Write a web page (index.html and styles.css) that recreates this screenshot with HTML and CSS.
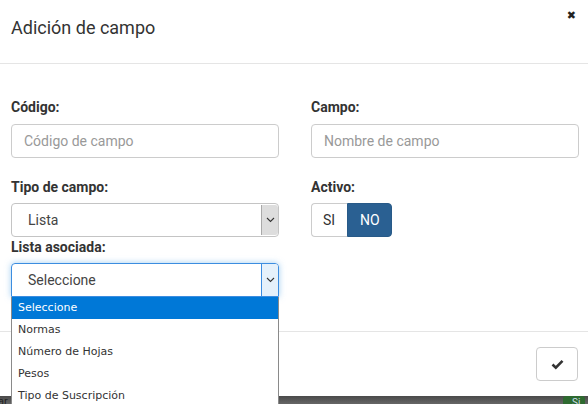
FILE: index.html
```html
<!DOCTYPE html>
<html lang="es">
<head>
<meta charset="utf-8">
<link rel="stylesheet" href="styles.css">
</head>
<body>
<div class="modal">
  <div class="modal-header">
    <h4 class="modal-title">Adición de campo</h4>
    <span class="close">&#x2716;</span>
  </div>
  <div class="modal-body">
    <div class="row">
      <div class="col">
        <label class="lbl">Código:</label>
        <div class="input placeholder">Código de campo</div>
        <label class="lbl lbl-gap">Tipo de campo:</label>
        <div class="select">
          <span class="select-text">Lista</span>
          <span class="arrow"><svg width="9" height="6" viewBox="0 0 9 6"><path d="M1 1 L4.5 4.5 L8 1" fill="none" stroke="#333" stroke-width="1.1"/></svg></span>
        </div>
        <label class="lbl lbl-tight">Lista asociada:</label>
        <div class="select focus">
          <span class="select-text">Seleccione</span>
          <span class="arrow"><svg width="9" height="6" viewBox="0 0 9 6"><path d="M1 1 L4.5 4.5 L8 1" fill="none" stroke="#333" stroke-width="1.1"/></svg></span>
          <ul class="dropdown">
            <li class="sel">Seleccione</li>
            <li>Normas</li>
            <li>Número de Hojas</li>
            <li>Pesos</li>
            <li>Tipo de Suscripción</li>
          </ul>
        </div>
      </div>
      <div class="col">
        <label class="lbl">Campo:</label>
        <div class="input placeholder">Nombre de campo</div>
        <label class="lbl lbl-gap">Activo:</label>
        <div class="toggle">
          <span class="opt">SI</span>
          <span class="opt active">NO</span>
        </div>
      </div>
    </div>
  </div>
  <div class="modal-footer">
    <button class="btn"><svg width="13" height="11" viewBox="0 0 13 11"><path d="M1.5 5.5 L4.8 8.6 L11.5 1.8" fill="none" stroke="#333" stroke-width="2.6"/></svg></button>
  </div>
</div>
<div class="backdrop">
  <span class="bg-text">ar</span>
  <span class="bg-btn">Si</span>
</div>
</body>
</html>
```
FILE: styles.css
```css
* { box-sizing: border-box; }
html, body { margin: 0; padding: 0; }
body {
  width: 588px;
  height: 404px;
  overflow: hidden;
  font-family: Roboto, "Liberation Sans", sans-serif;
  color: #333;
  background: #555;
}
.modal {
  background: #fff;
  height: 396px;
  display: flex;
  flex-direction: column;
}
.modal-header {
  height: 64px;
  border-bottom: 1px solid #e5e5e5;
  padding: 15px 11px 0 11px;
  display: flex;
  justify-content: space-between;
  align-items: flex-start;
}
.modal-title {
  margin: 0;
  font-size: 18px;
  font-weight: 400;
  line-height: 26px;
  color: #333;
}
.close {
  font-size: 11px;
  line-height: 1;
  margin-top: -5px;
  margin-right: 1px;
  color: #222;
  font-family: "DejaVu Sans", sans-serif;
  font-weight: bold;
}
.modal-body {
  height: 268px;
  padding: 33px 11px 0 11px;
  border-bottom: 1px solid #e5e5e5;
  position: relative;
}
.row {
  display: grid;
  grid-template-columns: 268px 268px;
  column-gap: 32px;
}
.col { display: flex; flex-direction: column; align-items: flex-start; }
.lbl {
  font-weight: 700;
  font-size: 14px;
  line-height: 20px;
  margin-bottom: 6px;
}
.lbl-gap { margin-top: 19px; }
.lbl-tight { margin-top: 0; margin-bottom: 6px; }
.input {
  width: 268px;
  height: 34px;
  margin-top: 1px;
  border: 1px solid #ccc;
  border-radius: 4px;
  padding: 0 12px;
  font-size: 14px;
  line-height: 32px;
}
.placeholder { color: #999; }
.select {
  position: relative;
  width: 268px;
  height: 34px;
  border: 1px solid #c4c4c4;
  border-radius: 4px;
  display: flex;
  align-items: stretch;
}
.select-text {
  flex: 1;
  padding-left: 16px;
  font-size: 14px;
  line-height: 32px;
  color: #444;
}
.arrow {
  width: 17px;
  margin: 1px 0;
  background: #dddddd;
  border-left: 1px solid #a9a9a9;
  border-radius: 0 3px 3px 0;
  display: flex;
  align-items: center;
  justify-content: center;
}
.select.focus {
  border-color: #3c8de0;
  box-shadow: 0 0 6px rgba(102, 175, 233, 0.6);
  border-radius: 4px 4px 0 0;
}
.select.focus .arrow {
  background: #e5f1fb;
  border-left: 1px solid #3c8de0;
  margin: 0;
  border-radius: 0 3px 0 0;
}
.dropdown {
  position: absolute;
  left: -1px;
  top: 33px;
  width: 268px;
  margin: 0;
  padding: 0;
  list-style: none;
  background: #fff;
  border: 1px solid #8a8a8a;
  border-top: none;
  font-family: "DejaVu Sans", Verdana, sans-serif;
  font-size: 11px;
  color: #333;
  z-index: 5;
}
.dropdown li {
  height: 22px;
  line-height: 22px;
  padding-left: 6px;
}
.dropdown li.sel {
  background: #0078d7;
  color: #fff;
}
.toggle {
  display: flex;
  height: 34px;
}
.opt {
  font-size: 14px;
  line-height: 32px;
  border: 1px solid #ccc;
  padding: 0 12px;
  color: #333;
  background: #fff;
}
.opt:first-child {
  border-radius: 4px 0 0 4px;
  border-right: none;
  width: 36px;
  padding: 0 0 0 11px;
}
.opt.active {
  background: #2a6092;
  border-color: #285a88;
  color: #fff;
  border-radius: 0 4px 4px 0;
  width: 45px;
  padding: 0 0 0 12px;
}
.modal-footer {
  flex: 1;
  display: flex;
  justify-content: flex-end;
  align-items: flex-start;
  padding: 15px 10px 0 0;
}
.btn {
  width: 42px;
  height: 34px;
  border: 1px solid #ccc;
  border-radius: 4px;
  background: #fff;
  display: flex;
  align-items: center;
  justify-content: center;
  padding: 0;
}
.backdrop {
  height: 8px;
  background: linear-gradient(#4a4a4a, #666);
  position: relative;
}
.bg-text {
  position: absolute;
  left: -2px;
  top: 0;
  font-size: 11px;
  line-height: 12px;
  color: #222;
}
.bg-btn {
  position: absolute;
  left: 563px;
  top: 0;
  width: 22px;
  height: 8px;
  background: #2e6a30;
  color: #cde;
  font-size: 10px;
  line-height: 14px;
  padding-left: 9px;
  border-radius: 3px 3px 0 0;
}
```
